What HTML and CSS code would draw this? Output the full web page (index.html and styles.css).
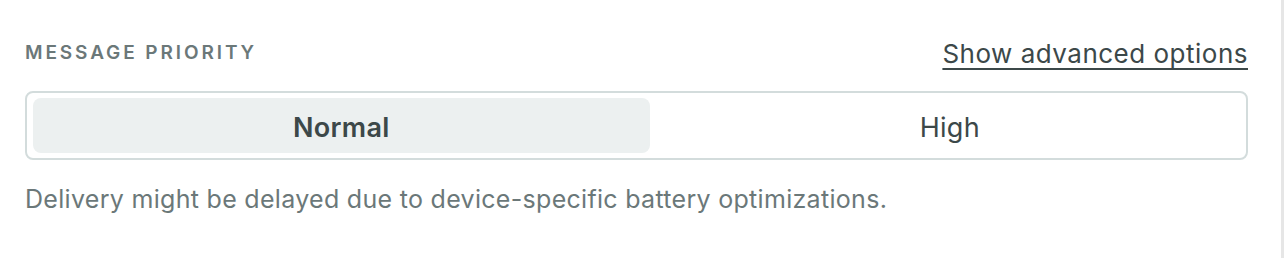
FILE: index.html
```html
<!DOCTYPE html>
<html lang="en">
<head>
  <meta charset="UTF-8" />
  <title>Message priority</title>
  <link rel="stylesheet" href="styles.css">
</head>
<body>
  <div class="panel">
    <div class="field-header">
      <span class="field-label">Message priority</span>
      <a class="advanced-link" href="#">Show advanced options</a>
    </div>

    <div class="segmented">
      <button class="segment active">Normal</button>
      <button class="segment">High</button>
    </div>

    <p class="hint">Delivery might be delayed due to device-specific battery optimizations.</p>
  </div>
</body>
</html>
```

FILE: styles.css
```css
body {
  font-family: Inter, "Noto Sans", sans-serif;
  margin: 0;
  background: #fff;
  color: #3c4849;
}

.panel {
  height: 258px;
  box-sizing: border-box;
  padding: 38px 33px 0 25px;
  border-right: 3px solid #e6e6e6;
}

.field-header {
  display: flex;
  justify-content: space-between;
  align-items: flex-start;
  margin-bottom: 21px;
}

.field-label {
  font-size: 19px;
  font-weight: 600;
  letter-spacing: 2.9px;
  text-transform: uppercase;
  color: #6b7879;
  line-height: 30px;
}

.advanced-link {
  font-size: 26px;
  letter-spacing: 0.5px;
  color: #3c4849;
  text-decoration: underline;
  text-underline-offset: 5px;
  text-decoration-thickness: 2px;
  line-height: 32px;
}

.segmented {
  display: flex;
  gap: 10px;
  border: 2px solid #d3dcdc;
  border-radius: 8px;
  padding: 5px 6px;
}

.segment {
  flex: 1 1 auto;
  height: 55px;
  padding: 4px 0 0;
  border: none;
  border-radius: 8px;
  background: transparent;
  font-family: inherit;
  font-size: 27px;
  letter-spacing: 0.3px;
  color: #3c4849;
  cursor: pointer;
}

.segment.active {
  background: #ecf0f0;
  font-weight: 600;
}

.hint {
  margin: 24px 0 0;
  font-size: 25px;
  letter-spacing: 0.3px;
  line-height: 30px;
  color: #6b7879;
}
```
